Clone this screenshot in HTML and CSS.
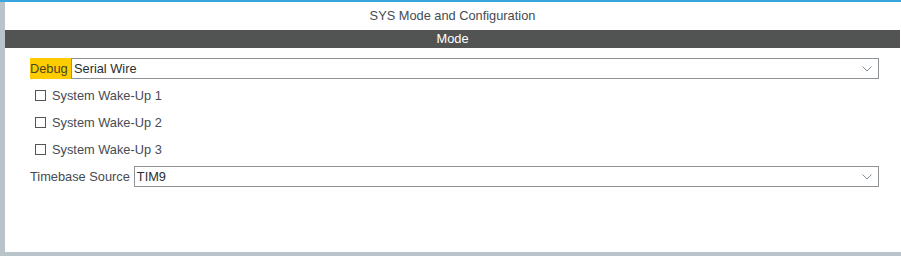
FILE: index.html
```html
<!DOCTYPE html>
<html>
<head>
<meta charset="utf-8">
<link rel="stylesheet" href="styles.css">
</head>
<body>
<div class="frame">
  <div class="panel">
    <div class="title">SYS Mode and Configuration</div>
    <div class="bar">Mode</div>
    <div class="form">
      <div class="field">
        <span class="label hl">Debug</span>
        <div class="select"><span>Serial Wire</span>
          <svg class="chev" width="10" height="6" viewBox="0 0 10 6"><path d="M0.5 0.5 L5 5 L9.5 0.5" fill="none" stroke="#8a8f94" stroke-width="1"/></svg>
        </div>
      </div>
      <div class="checks">
        <label class="check"><span class="box"></span>System Wake-Up 1</label>
        <label class="check"><span class="box"></span>System Wake-Up 2</label>
        <label class="check"><span class="box"></span>System Wake-Up 3</label>
      </div>
      <div class="field tb">
        <span class="label">Timebase Source</span>
        <div class="select"><span>TIM9</span>
          <svg class="chev" width="10" height="6" viewBox="0 0 10 6"><path d="M0.5 0.5 L5 5 L9.5 0.5" fill="none" stroke="#8a8f94" stroke-width="1"/></svg>
        </div>
      </div>
    </div>
  </div>
</div>
</body>
</html>
```
FILE: styles.css
```css
html, body {
  margin: 0;
  padding: 0;
  background: #fff;
}
body {
  width: 901px;
  height: 256px;
  overflow: hidden;
  font-family: "Liberation Sans", Arial, sans-serif;
  font-size: 12.8px;
  color: #454b52;
}
.frame {
  border-top: 2px solid #3aa4dc;
  height: 254px;
  box-sizing: border-box;
}
.panel {
  border-left: 5px solid #b9c4ca;
  border-bottom: 4px solid #b9c4ca;
  height: 254px;
  box-sizing: border-box;
  padding-right: 1px;
}
.title {
  height: 28px;
  line-height: 28px;
  text-align: center;
}
.bar {
  height: 18px;
  line-height: 18px;
  background: #525453;
  color: #fff;
  text-align: center;
}
.form {
  padding: 10px 21px 0 25px;
  display: flex;
  flex-direction: column;
}
.field {
  display: flex;
  align-items: center;
  height: 21px;
}
.label {
  height: 21px;
  line-height: 21px;
  white-space: nowrap;
  padding-right: 4px;
}
.hl {
  background: #ffcc00;
  color: #4a4426;
  padding-right: 0;
  width: 41px;
}
.select {
  flex: 1;
  height: 21px;
  box-sizing: border-box;
  border: 1px solid #8e9398;
  display: flex;
  align-items: center;
  justify-content: space-between;
  padding: 0 6px 0 2px;
  color: #2a2e33;
}
.chev {
  display: block;
}
.checks {
  display: flex;
  flex-direction: column;
  padding-top: 3px;
}
.check {
  height: 27px;
  display: flex;
  align-items: center;
  padding-left: 5px;
}
.box {
  width: 11px;
  height: 11px;
  box-sizing: border-box;
  border: 1px solid #555;
  margin-right: 6px;
  background: #fff;
}
.tb {
  margin-top: 3px;
}
```
